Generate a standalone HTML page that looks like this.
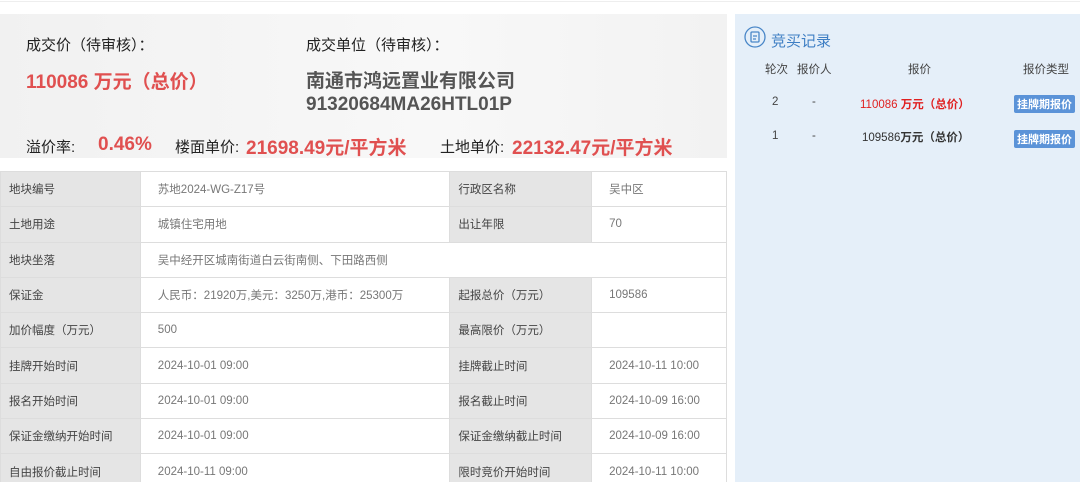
<!DOCTYPE html>
<html><head><meta charset="utf-8"><style>
*{margin:0;padding:0;box-sizing:border-box}
html,body{width:1080px;height:482px;overflow:hidden}
body{background:#fff;font-family:"Liberation Sans","Noto Sans CJK SC",sans-serif;position:relative}
.a{position:absolute;white-space:nowrap}
.top{left:0;top:14px;width:727px;height:144px;background:linear-gradient(90deg,#f1f1f1,#f8f8f8 60%,#f2f2f2)}
table{position:absolute;left:0;top:171px;width:727px;border-collapse:collapse;font-size:11.5px}
td{border:1px solid #ddd;height:35.3px;padding-left:8px;color:#777}
td.l{background:#e5e5e5;color:#444}
.r{left:735px;top:14px;width:345px;height:468px;background:#e5eff9}
.h{font-size:11.5px;color:#444}
.tag{background:#5b93d8;color:#fff;font-size:11px;font-weight:bold;padding:1px 3px;border-radius:2px}
</style></head><body>
<div class="a" style="left:0;top:1px;width:1080px;height:1px;background:#eee"></div>
<div class="a top"></div>
<div class="a" style="left:26px;top:34px;font-size:15px;color:#222">成交价（待审核）：</div>
<div class="a" style="left:306px;top:34px;font-size:15px;color:#222">成交单位（待审核）：</div>
<div class="a" style="left:26px;top:67px;font-size:19px;color:#e05050;font-weight:bold">110086 万元（总价）</div>
<div class="a" style="left:306px;top:66px;font-size:19px;color:#555;font-weight:bold">南通市鸿远置业有限公司</div>
<div class="a" style="left:306px;top:94px;font-size:19px;color:#555;font-weight:bold">91320684MA26HTL01P</div>
<div class="a" style="left:26px;top:136px;font-size:15px;color:#222">溢价率:</div>
<div class="a" style="left:98px;top:134px;font-size:19px;color:#e05050;font-weight:bold">0.46%</div>
<div class="a" style="left:175px;top:136px;font-size:15px;color:#222">楼面单价:</div>
<div class="a" style="left:246px;top:133px;font-size:19px;color:#e05050;font-weight:bold">21698.49元/平方米</div>
<div class="a" style="left:440px;top:136px;font-size:15px;color:#222">土地单价:</div>
<div class="a" style="left:512px;top:133px;font-size:19px;color:#e05050;font-weight:bold">22132.47元/平方米</div>
<table>
<colgroup><col style="width:140px"><col style="width:310px"><col style="width:142px"><col style="width:135px"></colgroup>
<tr><td class="l">地块编号</td><td style="padding-left:17px">苏地2024-WG-Z17号</td><td class="l">行政区名称</td><td style="padding-left:17px">吴中区</td></tr>
<tr><td class="l">土地用途</td><td style="padding-left:17px">城镇住宅用地</td><td class="l">出让年限</td><td style="padding-left:17px">70</td></tr>
<tr><td class="l">地块坐落</td><td colspan="3" style="padding-left:17px">吴中经开区城南街道白云街南侧、下田路西侧</td></tr>
<tr><td class="l">保证金</td><td style="padding-left:17px">人民币：21920万,美元：3250万,港币：25300万</td><td class="l">起报总价（万元）</td><td style="padding-left:17px">109586</td></tr>
<tr><td class="l">加价幅度（万元）</td><td style="padding-left:17px">500</td><td class="l">最高限价（万元）</td><td></td></tr>
<tr><td class="l">挂牌开始时间</td><td style="padding-left:17px">2024-10-01 09:00</td><td class="l">挂牌截止时间</td><td style="padding-left:17px">2024-10-11 10:00</td></tr>
<tr><td class="l">报名开始时间</td><td style="padding-left:17px">2024-10-01 09:00</td><td class="l">报名截止时间</td><td style="padding-left:17px">2024-10-09 16:00</td></tr>
<tr><td class="l">保证金缴纳开始时间</td><td style="padding-left:17px">2024-10-01 09:00</td><td class="l">保证金缴纳截止时间</td><td style="padding-left:17px">2024-10-09 16:00</td></tr>
<tr><td class="l">自由报价截止时间</td><td style="padding-left:17px">2024-10-11 09:00</td><td class="l">限时竞价开始时间</td><td style="padding-left:17px">2024-10-11 10:00</td></tr>
</table>
<div class="a r"></div>
<svg class="a" style="left:744px;top:26px" width="22" height="22" viewBox="0 0 22 22"><circle cx="11" cy="11" r="10" fill="none" stroke="#4a87c8" stroke-width="1.3"/><rect x="7" y="6" width="8" height="10" rx="1" fill="none" stroke="#4a87c8" stroke-width="1.3"/><path d="M9 10h4M9 13h3" stroke="#4a87c8" stroke-width="1.2"/></svg>
<div class="a" style="left:771px;top:30px;font-size:15px;color:#3f7fc4">竞买记录</div>
<div class="a h" style="left:765px;top:61px">轮次</div>
<div class="a h" style="left:797px;top:61px">报价人</div>
<div class="a h" style="left:908px;top:61px">报价</div>
<div class="a h" style="left:1023px;top:61px">报价类型</div>
<div class="a h" style="left:772px;top:96px">2</div>
<div class="a h" style="left:812px;top:96px">-</div>
<div class="a" style="left:860px;top:96px;font-size:11.5px;color:#e02020">110086 <b>万元（总价）</b></div>
<div class="a tag" style="left:1014px;top:95px">挂牌期报价</div>
<div class="a h" style="left:772px;top:130px">1</div>
<div class="a h" style="left:812px;top:130px">-</div>
<div class="a h" style="left:862px;top:129px;color:#333">109586<b>万元（总价）</b></div>
<div class="a tag" style="left:1014px;top:130px">挂牌期报价</div>
</body></html>
